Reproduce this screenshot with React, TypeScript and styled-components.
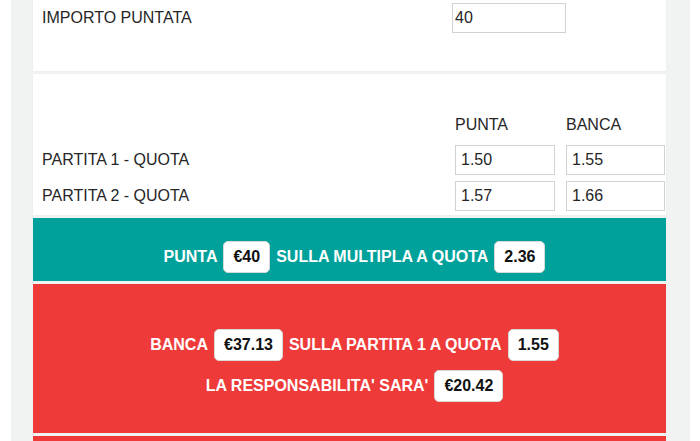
import React from "react";
import styled, { createGlobalStyle } from "styled-components";

const Global = createGlobalStyle`
  html, body { margin: 0; padding: 0; background: #ffffff; }
  body { font-family: "Liberation Sans", Arial, Helvetica, sans-serif; color: #333; }
  * { box-sizing: border-box; }
`;

const Outer = styled.div`
  margin-left: 11px;
  width: 679px;
  height: 441px;
  background: #f1f2f2;
  padding: 0 24px 0 22px;
  display: flex;
  flex-direction: column;
  gap: 3px;
  overflow: hidden;
`;

const Card = styled.div<{ $pt: number; $pb: number }>`
  background: #ffffff;
  padding: ${(p) => p.$pt}px 1px ${(p) => p.$pb}px 9px;
  box-shadow: 0 0 1px rgba(0, 0, 0, 0.08);
  flex-shrink: 0;
`;

const TopCard = styled(Card)`
  height: 71px;
`;

const Grid = styled.div<{ $cols: string }>`
  display: grid;
  grid-template-columns: ${(p) => p.$cols};
  column-gap: 11px;
  row-gap: 6px;
  align-items: center;
`;

const Label = styled.div`
  font-size: 16px;
  line-height: 20px;
  color: #262626;
`;

const HeadLabel = styled(Label)`
  margin-bottom: 4px;
`;

const Field = styled.input<{ $pl: number }>`
  width: 100%;
  height: 30px;
  border: 1px solid #d2d2d2;
  border-radius: 0;
  background: #fff;
  font-family: "Liberation Sans", Arial, Helvetica, sans-serif;
  font-size: 16px;
  color: #262626;
  padding: 0 0 0 ${(p) => p.$pl}px;
  outline: none;
`;

const Band = styled.div<{ $bg: string; $pt: number; $pb: number }>`
  background: ${(p) => p.$bg};
  padding: ${(p) => p.$pt}px 0 ${(p) => p.$pb}px 10px;
  display: flex;
  flex-direction: column;
  align-items: center;
  gap: 9px;
  flex-shrink: 0;
`;

const Line = styled.div`
  display: flex;
  align-items: center;
  gap: 6px;
  color: #ffffff;
  font-weight: 700;
  font-size: 16px;
  line-height: 18px;
  white-space: nowrap;
`;

const Badge = styled.span`
  display: inline-block;
  background: #ffffff;
  color: #111;
  border: 1px solid #d8d8d8;
  border-radius: 5px;
  padding: 6px 9px;
  font-weight: 700;
  font-size: 16px;
  line-height: 18px;
`;

export default function App() {
  return (
    <>
      <Global />
      <Outer>
        <TopCard $pt={3} $pb={0}>
          <Grid $cols="1fr 114px 88px">
            <Label>IMPORTO PUNTATA</Label>
            <Field $pl={2} defaultValue="40" />
            <div />
          </Grid>
        </TopCard>
        <Card $pt={41} $pb={4}>
          <Grid $cols="1fr 100px 99px">
            <div />
            <HeadLabel>PUNTA</HeadLabel>
            <HeadLabel>BANCA</HeadLabel>
            <Label>PARTITA 1 - QUOTA</Label>
            <Field $pl={5} defaultValue="1.50" />
            <Field $pl={5} defaultValue="1.55" />
            <Label>PARTITA 2 - QUOTA</Label>
            <Field $pl={5} defaultValue="1.57" />
            <Field $pl={5} defaultValue="1.66" />
          </Grid>
        </Card>
        <Band $bg="#00a19b" $pt={23} $pb={8}>
          <Line>
            PUNTA <Badge>€40</Badge> SULLA MULTIPLA A QUOTA <Badge>2.36</Badge>
          </Line>
        </Band>
        <Band $bg="#ee3b3a" $pt={45} $pb={31}>
          <Line>
            BANCA <Badge>€37.13</Badge> SULLA PARTITA 1 A QUOTA <Badge>1.55</Badge>
          </Line>
          <Line>
            LA RESPONSABILITA' SARA' <Badge>€20.42</Badge>
          </Line>
        </Band>
        <Band $bg="#ee3b3a" $pt={40} $pb={40}>
          <Line>&nbsp;</Line>
        </Band>
      </Outer>
    </>
  );
}
